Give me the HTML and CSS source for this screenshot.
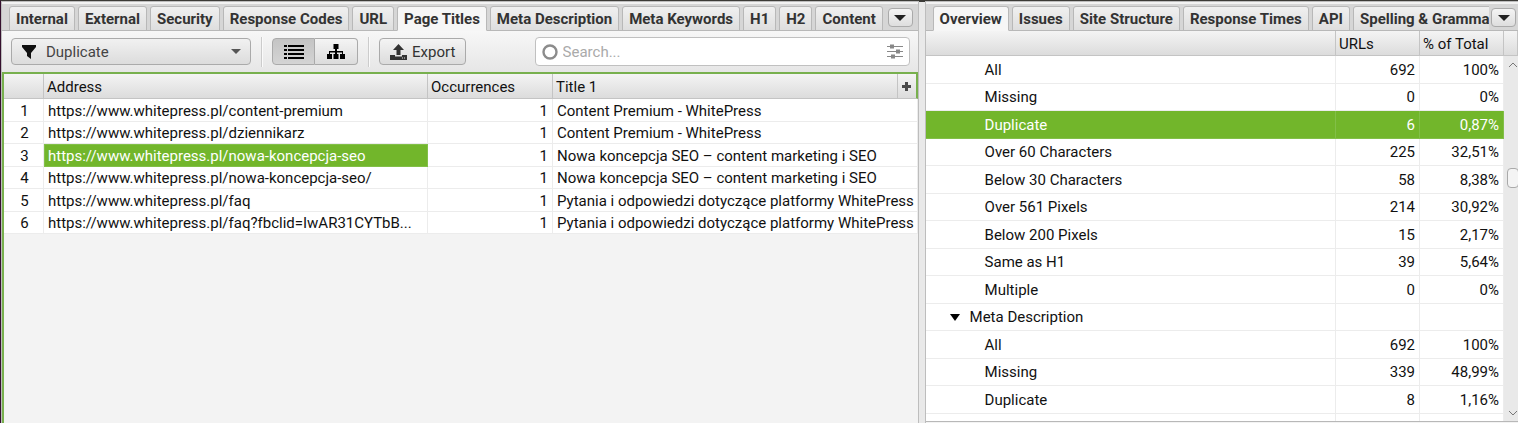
FILE: index.html
```
<!DOCTYPE html>
<html lang="en">
	<head>
		<meta charset="UTF-8" />
		<meta name="viewport" content="width=device-width, initial-scale=1.0" />
		<title>Page Titles</title>
		<link rel="stylesheet" href="styles.css">
	</head>
	<body>
		<div class="window">
			<main class="pane">
				<nav class="tabs">
					<div class="tab-list">
						<button type="button" class="tab">Internal</button>
						<button type="button" class="tab">External</button>
						<button type="button" class="tab">Security</button>
						<button type="button" class="tab">Response Codes</button>
						<button type="button" class="tab">URL</button>
						<button type="button" class="tab active">Page Titles</button>
						<button type="button" class="tab">Meta Description</button>
						<button type="button" class="tab">Meta Keywords</button>
						<button type="button" class="tab">H1</button>
						<button type="button" class="tab">H2</button>
						<button type="button" class="tab">Content</button>
						<span class="tab"></span>
					</div>
					<button type="button" class="tab-menu" aria-label="More tabs">
						<svg width="12" height="6" viewBox="0 0 12 6"><path d="M0 0h12L6 6z" fill="#222" /></svg>
					</button>
				</nav>

				<div class="toolbar">
					<div class="filter">
						<svg width="14" height="14" viewBox="0 0 14 14"><path d="M0 0h14v2L9 8v6L5 11V8L0 2z" fill="#111" /></svg>
						<select class="filter-select" aria-label="Filter">
							<option>Duplicate</option>
						</select>
						<svg width="10" height="5" viewBox="0 0 10 5"><path d="M0 0h10L5 5z" fill="#555" /></svg>
					</div>
					<span class="divider"></span>
					<div class="view-switch">
						<button type="button" class="view-button pressed" aria-label="List view">
							<svg width="20" height="14" viewBox="0 0 20 14"><path d="M0 0h3v2H0zM4 0h16v2H4zM0 4h3v2H0zM4 4h16v2H4zM0 8h3v2H0zM4 8h16v2H4zM0 12h3v2H0zM4 12h16v2H4z" fill="#000" /></svg>
						</button>
						<button type="button" class="view-button" aria-label="Tree view">
							<svg width="18" height="15" viewBox="0 0 18 15"><path d="M6.500 0h5v5H10v2h6v3h2v5h-5v-5h2V8.500h-5V10h1.500v5h-5v-5H8V8.500H3V10h2v5H0v-5h2V7h6V5H6.500z" fill="#000" /></svg>
						</button>
					</div>
					<span class="divider"></span>
					<button type="button" class="export">
						<svg width="17" height="16" viewBox="0 0 17 16"><path d="M8.500 0L14 6h-3.500v5h-4V6H3zM0 11h5v1.500h7V11h5v5H0z" fill="#333" /><path d="M12 13.500h1v1h-1zM14 13.500h1v1h-1z" fill="#ddd" /></svg>
						Export
					</button>
					<div class="search">
						<svg width="16" height="16" viewBox="0 0 16 16"><circle cx="8" cy="8" r="6.500" fill="none" stroke="#8c8c8c" stroke-width="2.400" /></svg>
						<input type="text" class="search-input" placeholder="Search..." aria-label="Search" />
						<svg width="16" height="15" viewBox="0 0 16 15"><path d="M0 2.500h16M0 7.500h16M0 12.500h16" stroke="#888" /><path d="M3 .5h4v4H3zM9 5.500h4v4H9zM4 10.500h4v4H4z" fill="#888" /></svg>
					</div>
				</div>

				<div class="results">
					<table class="results-table">
						<colgroup>
							<col class="col-number" />
							<col class="col-address" />
							<col class="col-count" />
							<col />
							<col class="col-add" />
						</colgroup>
						<thead>
							<tr>
								<th></th>
								<th>Address</th>
								<th>Occurrences</th>
								<th>Title 1</th>
								<th class="add">
									<button type="button" class="add-button" aria-label="Add column">
										<svg width="9" height="9" viewBox="0 0 9 9"><path d="M3 0h3v3h3v3H6v3H3V6H0V3h3z" fill="#4a4a4a" /></svg>
									</button>
								</th>
							</tr>
						</thead>
						<tbody>
							<tr>
								<td class="number">1</td>
								<td>https://www.whitepress.pl/content-premium</td>
								<td class="count">1</td>
								<td colspan="2">Content Premium - WhitePress</td>
							</tr>
							<tr>
								<td class="number">2</td>
								<td>https://www.whitepress.pl/dziennikarz</td>
								<td class="count">1</td>
								<td colspan="2">Content Premium - WhitePress</td>
							</tr>
							<tr>
								<td class="number">3</td>
								<td class="selected">https://www.whitepress.pl/nowa-koncepcja-seo</td>
								<td class="count">1</td>
								<td colspan="2">Nowa koncepcja SEO – content marketing i SEO</td>
							</tr>
							<tr>
								<td class="number">4</td>
								<td>https://www.whitepress.pl/nowa-koncepcja-seo/</td>
								<td class="count">1</td>
								<td colspan="2">Nowa koncepcja SEO – content marketing i SEO</td>
							</tr>
							<tr>
								<td class="number">5</td>
								<td>https://www.whitepress.pl/faq</td>
								<td class="count">1</td>
								<td colspan="2">Pytania i odpowiedzi dotyczące platformy WhitePress</td>
							</tr>
							<tr>
								<td class="number">6</td>
								<td>https://www.whitepress.pl/faq?fbclid=IwAR31CYTbB...</td>
								<td class="count">1</td>
								<td colspan="2">Pytania i odpowiedzi dotyczące platformy WhitePress</td>
							</tr>
						</tbody>
					</table>
				</div>
			</main>

			<aside class="pane">
				<nav class="tabs side-tabs">
					<div class="tab-list">
						<button type="button" class="tab active">Overview</button>
						<button type="button" class="tab">Issues</button>
						<button type="button" class="tab">Site Structure</button>
						<button type="button" class="tab">Response Times</button>
						<button type="button" class="tab">API</button>
						<button type="button" class="tab">Spelling &amp; Gramma</button>
					</div>
					<button type="button" class="tab-menu" aria-label="More tabs">
						<svg width="12" height="6" viewBox="0 0 12 6"><path d="M0 0h12L6 6z" fill="#222" /></svg>
					</button>
				</nav>

				<div class="overview">
					<table class="overview-table">
						<colgroup>
							<col />
							<col class="col-urls" />
							<col class="col-total" />
							<col class="col-scroll" />
						</colgroup>
						<thead>
							<tr>
								<th></th>
								<th>URLs</th>
								<th>% of Total</th>
								<th></th>
							</tr>
						</thead>
						<tbody>
							<tr>
								<td>All</td>
								<td>692</td>
								<td>100%</td>
								<td class="scroll" rowspan="14">
									<div class="scrollbar">
										<svg width="10" height="6" viewBox="0 0 10 6"><path d="M1 5l4-4 4 4" fill="none" stroke="#777" /></svg>
										<span class="thumb"></span>
										<svg width="10" height="6" viewBox="0 0 10 6"><path d="M1 1l4 4 4-4" fill="none" stroke="#777" /></svg>
									</div>
								</td>
							</tr>
							<tr>
								<td>Missing</td>
								<td>0</td>
								<td>0%</td>
							</tr>
							<tr class="selected">
								<td>Duplicate</td>
								<td>6</td>
								<td>0,87%</td>
							</tr>
							<tr>
								<td>Over 60 Characters</td>
								<td>225</td>
								<td>32,51%</td>
							</tr>
							<tr>
								<td>Below 30 Characters</td>
								<td>58</td>
								<td>8,38%</td>
							</tr>
							<tr>
								<td>Over 561 Pixels</td>
								<td>214</td>
								<td>30,92%</td>
							</tr>
							<tr>
								<td>Below 200 Pixels</td>
								<td>15</td>
								<td>2,17%</td>
							</tr>
							<tr>
								<td>Same as H1</td>
								<td>39</td>
								<td>5,64%</td>
							</tr>
							<tr>
								<td>Multiple</td>
								<td>0</td>
								<td>0%</td>
							</tr>
							<tr>
								<td class="group">
									<svg class="arrow" width="10" height="7" viewBox="0 0 10 7"><path d="M0 0h10L5 7z" fill="#000" /></svg>Meta Description
								</td>
								<td></td>
								<td></td>
							</tr>
							<tr>
								<td>All</td>
								<td>692</td>
								<td>100%</td>
							</tr>
							<tr>
								<td>Missing</td>
								<td>339</td>
								<td>48,99%</td>
							</tr>
							<tr>
								<td>Duplicate</td>
								<td>8</td>
								<td>1,16%</td>
							</tr>
							<tr class="rest">
								<td></td>
								<td></td>
								<td></td>
							</tr>
						</tbody>
					</table>
				</div>
			</aside>
		</div>
	</body>
</html>
```
FILE: styles.css
```
:root {
	--text-color: #111;
	--tab-color: #333;
	--bg-color: #f3f3f3;
	--border-color: #b8b8b8;
	--line-color: #ececec;
	--green: #72b62b;
	--green-border: #78b04e;
	--header-bg: linear-gradient(#f4f4f4, #dcdcdc);
}
* {
	box-sizing: border-box;
}
body {
	margin: 0;
	font-family: Roboto, Arial, sans-serif;
	font-size: 15px;
	color: var(--text-color);
	background-color: var(--bg-color);
}
button,
input,
select {
	margin: 0;
	font-family: inherit;
	font-size: inherit;
}
svg {
	display: block;
	flex: none;
}
.window {
	display: grid;
	grid-template-columns: 17fr 11fr;
	gap: 8px;
	min-height: 100vh;
	border-top: 2px solid #3c3b37;
	border-left: 2px solid #35102e;
	background-color: #e9e9e9;
}
.pane {
	display: flex;
	flex-direction: column;
	min-width: 0;
	background-color: var(--bg-color);
	box-shadow: 0 0 0 1px #bdbdbd;
}

/* tabs */
.tabs {
	display: flex;
	align-items: flex-end;
	height: 29px;
	padding: 0 5px 0 7px;
	background-color: #d6d6d6;
	border-top: 2px solid #f2f2f2;
	border-bottom: 1px solid var(--border-color);
}
.side-tabs {
	padding-right: 2px;
}
.tab-list {
	display: flex;
	flex: 1;
	gap: 3px;
	min-width: 0;
	margin-bottom: -1px;
	overflow: hidden;
}
.tab {
	flex: none;
	height: 25px;
	padding: 0 6px;
	font-weight: 700;
	line-height: 24px;
	color: var(--tab-color);
	background: linear-gradient(#f0f0f0, #dedede);
	border: 1px solid var(--border-color);
	border-radius: 3px 3px 0 0;
}
.tab.active {
	background: #f6f6f6;
	border-bottom-color: #f6f6f6;
}
.tab-menu {
	display: flex;
	align-items: center;
	justify-content: center;
	width: 25px;
	height: 19px;
	margin: 0 0 3px 2px;
	padding: 0;
	background: linear-gradient(#f4f4f4, #dedede);
	border: 1px solid #aaa;
	border-radius: 4px;
}

/* toolbar */
.toolbar {
	display: flex;
	align-items: center;
	height: 41px;
	padding: 0 8px 0 9px;
	color: #444;
	background: linear-gradient(#f7f7f7, #e6e6e6);
}
.filter {
	display: flex;
	align-items: center;
	width: 240px;
	height: 27px;
	padding: 0 9px 0 10px;
	background: linear-gradient(#f1f1f1, #dcdcdc);
	border: 1px solid #aaa;
	border-radius: 4px;
}
.filter-select {
	flex: 1;
	min-width: 0;
	padding: 0 10px;
	color: inherit;
	background: none;
	border: none;
	appearance: none;
}
.divider {
	width: 2px;
	height: 30px;
	margin: 0 9px 0 10px;
	background-color: #fafafa;
	border-left: 1px solid #ccc;
}
.view-switch {
	display: flex;
}
.view-button {
	display: flex;
	align-items: center;
	justify-content: center;
	width: 43px;
	height: 27px;
	padding: 0;
	background: linear-gradient(#f4f4f4, #dcdcdc);
	border: 1px solid #aaa;
	border-left: none;
	border-radius: 0 4px 4px 0;
}
.view-button.pressed {
	background: linear-gradient(#c4c4c4, #d4d4d4);
	border-left: 1px solid #aaa;
	border-radius: 4px 0 0 4px;
}
.export {
	display: flex;
	align-items: center;
	gap: 5px;
	height: 27px;
	padding: 0 10px;
	color: #333;
	background: linear-gradient(#f4f4f4, #dcdcdc);
	border: 1px solid #aaa;
	border-radius: 4px;
}
.search {
	display: flex;
	align-items: center;
	width: 375px;
	height: 29px;
	margin-left: auto;
	padding: 0 6px;
	background-color: #fff;
	border: 1px solid #c0c0c0;
	border-radius: 4px;
}
.search-input {
	flex: 1;
	min-width: 0;
	padding: 0 5px;
	background: none;
	border: none;
}
.search-input::placeholder {
	color: #aaa;
}

/* tables */
table {
	width: 100%;
	table-layout: fixed;
	border-collapse: separate;
	border-spacing: 0;
}
th {
	font-weight: 400;
	text-align: left;
	background: var(--header-bg);
	border-right: 1px solid #c4c4c4;
	border-bottom: 1px solid #c4c4c4;
}
td {
	white-space: nowrap;
	background-color: #fff;
	border-right: 1px solid var(--line-color);
	border-bottom: 1px solid var(--line-color);
}
.results {
	flex: 1;
	border-top: 2px solid var(--green-border);
	border-left: 2px solid var(--green-border);
}
.results-table th {
	height: 25px;
	padding: 2px 3px 0;
}
.results-table td {
	height: 22px;
	padding: 1px 4px 0;
	line-height: 20px;
	overflow: hidden;
}
.results-table tbody tr:nth-child(odd) td {
	height: 23px;
}
.results-table td.number {
	padding: 1px 3px 0 5px;
	text-align: center;
}
.results-table td.count {
	text-align: right;
}
.results-table td.selected {
	padding: 0 3px;
	color: #fff;
	background-color: var(--green);
	border: 1px solid #82bf48;
}
.results-table th.add {
	padding: 0;
	border-right: 2px solid var(--green-border);
}
.add-button {
	display: flex;
	align-items: center;
	justify-content: center;
	width: 100%;
	padding: 0;
	background: none;
	border: none;
}
.col-number {
	width: 40px;
}
.col-address {
	width: 384px;
}
.col-count {
	width: 125px;
}
.col-add {
	width: 20px;
}

/* overview */
.overview {
	border-bottom: 1px solid var(--border-color);
}
.overview-table th {
	height: 25px;
	padding: 2px 3px 0;
}
.overview-table td {
	height: 27px;
	padding: 0 4px;
	text-align: right;
}
.overview-table tbody tr:nth-child(odd) td {
	height: 28px;
}
.overview-table td:first-child {
	padding-left: 59px;
	text-align: left;
}
.overview-table td.group {
	padding-left: 24px;
}
.arrow {
	display: inline-block;
	margin-right: 10px;
	vertical-align: 1px;
}
.overview-table .selected td {
	color: #fff;
	background-color: var(--green);
	border-color: #82bf48;
}
.overview-table tbody .rest td {
	height: 7px;
	border-bottom: none;
}
.overview-table tbody td.scroll:last-child {
	padding: 0;
	background-color: #e9e9e9;
	border: none;
}
.scrollbar {
	display: flex;
	flex-direction: column;
	align-items: center;
	justify-content: space-between;
	height: 360px;
	padding: 3px 0 3px 3px;
}
.thumb {
	width: 12px;
	height: 20px;
	margin-bottom: 122px;
	background-color: #f4f4f4;
	border: 1px solid #aaa;
	border-radius: 4px;
}
.col-urls {
	width: 84px;
}
.col-total {
	width: 84px;
}
.col-scroll {
	width: 14px;
}
```
